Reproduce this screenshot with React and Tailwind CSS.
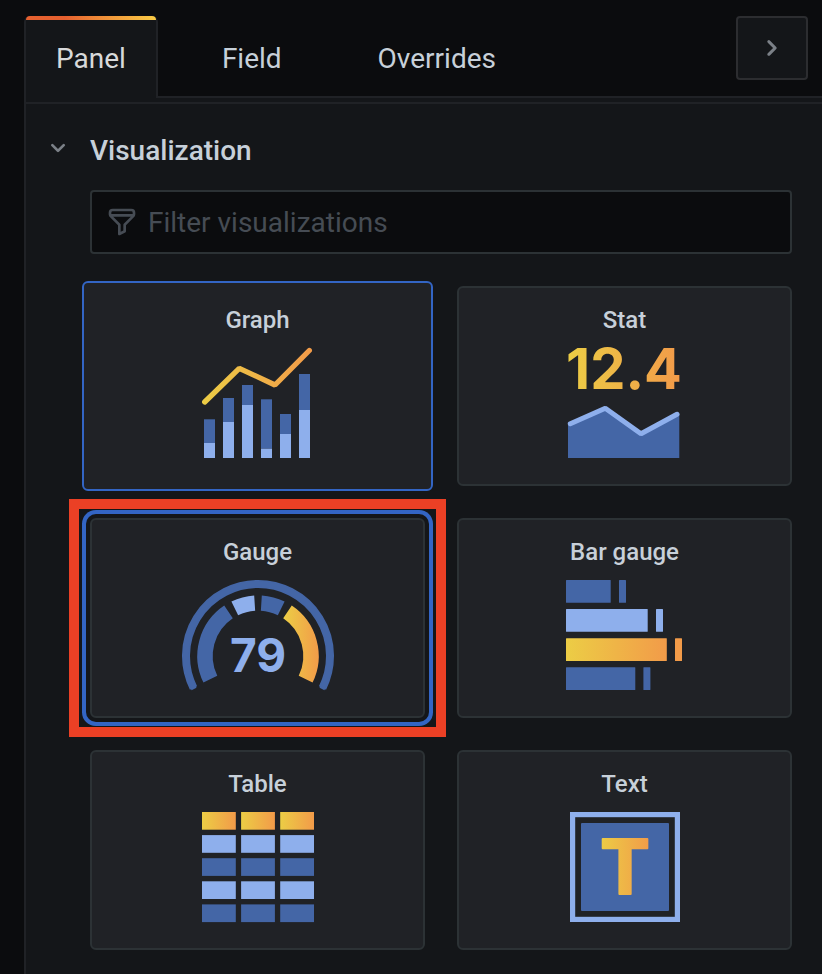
import { useState } from "react";

const DARK = "#4466a6";
const LIGHT = "#8eafec";

function Gradient({ id, x1, x2 }) {
  return (
    <linearGradient id={id} gradientUnits="userSpaceOnUse" x1={x1} x2={x2} y1="0" y2="0">
      <stop offset="0" stopColor="#eccd45" />
      <stop offset="1" stopColor="#f29b49" />
    </linearGradient>
  );
}

function Drawing({ children }) {
  return (
    <svg viewBox="0 0 160 110" className="h-[110px] w-40 overflow-visible" aria-hidden="true">
      {children}
    </svg>
  );
}

function GraphDrawing() {
  // [x, top of the bar, top of its light part]
  const bars = [
    [26, 71.3, 95],
    [45, 50, 74],
    [64, 37, 57],
    [83, 51.3, 100.7],
    [102, 66, 86],
    [121, 26, 62],
  ];
  return (
    <Drawing>
      <defs>
        <Gradient id="graph-line" x1="24" x2="134" />
      </defs>
      {bars.map(([x, top, split]) => (
        <g key={x}>
          <rect x={x} y={top} width="11" height={split - top} fill={DARK} />
          <rect x={x} y={split} width="11" height={110 - split} fill={LIGHT} />
        </g>
      ))}
      <polyline
        points="26.7,54 61.3,20.3 97,37 131.3,2.5"
        fill="none"
        stroke="url(#graph-line)"
        strokeWidth="5.3"
        strokeLinecap="round"
        strokeLinejoin="bevel"
      />
    </Drawing>
  );
}

function StatDrawing() {
  return (
    <Drawing>
      <defs>
        <Gradient id="stat-value" x1="23" x2="134" />
      </defs>
      <text x="79" y="41" textAnchor="middle" fontSize="56" fill="url(#stat-value)" className="font-['Inter',sans-serif] font-bold">
        12.4
      </text>
      <polygon points="23,76 60.3,60.3 96,85.7 134.3,66 134.3,110 23,110" fill={DARK} />
      <polyline
        points="25.3,75.7 60.3,60.3 96,85.7 132,66.3"
        fill="none"
        stroke={LIGHT}
        strokeWidth="5"
        strokeLinecap="round"
        strokeLinejoin="bevel"
      />
    </Drawing>
  );
}

// Arc around the gauge's centre; angles in degrees, clockwise from the right.
function arc(radius, from, to) {
  const point = (deg) => {
    const a = (deg * Math.PI) / 180;
    return `${(80 + radius * Math.cos(a)).toFixed(2)} ${(76 + radius * Math.sin(a)).toFixed(2)}`;
  };
  return `M${point(from)}A${radius} ${radius} 0 ${to - from > 180 ? 1 : 0} 1 ${point(to)}`;
}

function GaugeDrawing() {
  return (
    <Drawing>
      <defs>
        <Gradient id="gauge-high" x1="106" x2="141" />
      </defs>
      <g fill="none" stroke={DARK} strokeWidth="15.4">
        <path d={arc(72, 153.6, 386.4)} strokeWidth="8" />
        <path d={arc(72, 152.7, 387.3)} strokeWidth="5.5" />
        <path d={arc(53, 154, 236.2)} />
        <path d={arc(53, 244, 266.4)} stroke={LIGHT} />
        <path d={arc(53, 273.6, 296)} />
        <path d={arc(53, 303.8, 386)} stroke="url(#gauge-high)" />
      </g>
      <text x="80" y="92" textAnchor="middle" fontSize="46" fill={LIGHT} className="font-['Inter',sans-serif] font-bold">
        79
      </text>
    </Drawing>
  );
}

function BarGaugeDrawing() {
  // [top, bar width, marker x, bar fill, marker fill]
  const rows = [
    [0, 44.7, 74, DARK, DARK],
    [29.1, 81.7, 111, LIGHT, LIGHT],
    [58.2, 100.8, 130, "url(#bar-gauge)", "#f29b49"],
    [87.3, 69.3, 98.4, DARK, DARK],
  ];
  return (
    <Drawing>
      <defs>
        <Gradient id="bar-gauge" x1="21" x2="122" />
      </defs>
      {rows.map(([y, width, marker, fill, markerFill]) => (
        <g key={y}>
          <rect x="21" y={y} width={width} height="22.7" rx="0.5" fill={fill} />
          <rect x={marker} y={y} width="7" height="22.7" rx="0.5" fill={markerFill} />
        </g>
      ))}
    </Drawing>
  );
}

function TableDrawing() {
  const columns = [24, 63.1, 102.2];
  return (
    <Drawing>
      <defs>
        {columns.map((x, i) => (
          <Gradient key={x} id={`table-head-${i}`} x1={x} x2={x + 33.8} />
        ))}
      </defs>
      {columns.map((x, i) =>
        [`url(#table-head-${i})`, LIGHT, DARK, LIGHT, DARK].map((fill, row) => (
          <rect key={`${x}-${row}`} x={x} y={row * 23.1} width="33.8" height="17.7" fill={fill} />
        ))
      )}
    </Drawing>
  );
}

function TextDrawing() {
  return (
    <Drawing>
      <defs>
        <Gradient id="text-letter" x1="55" x2="105" />
      </defs>
      <rect x="27.6" y="2.6" width="104.8" height="104.8" fill="none" stroke={LIGHT} strokeWidth="5.2" />
      <rect x="36" y="11" width="88" height="88" rx="1" fill={DARK} />
      <text
        x="80"
        y="82"
        textAnchor="middle"
        fontSize="75"
        fill="url(#text-letter)"
        stroke="url(#text-letter)"
        strokeWidth="2"
        strokeLinejoin="round"
        className="font-['Inter',sans-serif] font-bold"
      >
        T
      </text>
    </Drawing>
  );
}

const VISUALIZATIONS = [
  { name: "Graph", Picture: GraphDrawing, selected: true },
  { name: "Stat", Picture: StatDrawing },
  { name: "Gauge", Picture: GaugeDrawing, focused: true },
  { name: "Bar gauge", Picture: BarGaugeDrawing },
  { name: "Table", Picture: TableDrawing },
  { name: "Text", Picture: TextDrawing },
];

function VisualizationCard({ name, Picture, selected, focused }) {
  const base = "flex flex-col items-center border-2 bg-[#202226]";
  let look = "h-[200px] w-full rounded-md border-[#2c3235] pt-[18px]";
  if (selected) look = "-mx-2 -my-[5px] h-[210px] w-[calc(100%+16px)] rounded-md border-[#3365c4] pt-[23px]";
  if (focused) look += " ring-4 ring-[#3365c4] ring-offset-4 ring-offset-[#141619]";
  return (
    <li className="relative">
      <button type="button" aria-pressed={Boolean(selected)} className={`${base} ${look}`}>
        <span className="mb-3.5 text-2xl leading-7 font-medium text-[#c7d0d9]">{name}</span>
        <Picture />
      </button>
      {focused && (
        <div className="pointer-events-none absolute -inset-x-[21px] -inset-y-[19px] border-10 border-[#eb4025]" />
      )}
    </li>
  );
}

export default function App() {
  const [filter, setFilter] = useState("");
  return (
    <div className="flex min-h-screen flex-col bg-[#0b0c0e] pl-6 font-['Roboto',sans-serif] text-[28px] leading-[34px] text-[#c7d0d9]">
      <header className="flex items-start justify-between border-b-2 border-[#202226] pt-4">
        <nav className="-mb-0.5 flex gap-8" aria-label="Panel options">
          <a href="#panel" aria-current="page" className="relative h-[82px] rounded-t-md border-x-2 border-[#202226] bg-[#141619] px-[30px] pt-[26px] text-[#d8d9da]">
            <span className="absolute inset-x-0 top-0 h-1 rounded-t bg-linear-to-r from-[#e5602f] from-30% to-[#f8cb45]" />
            Panel
          </a>
          <a href="#field" className="h-20 px-8 pt-[26px]">
            Field
          </a>
          <a href="#overrides" className="h-20 px-8 pt-[26px]">
            Overrides
          </a>
        </nav>
        <button type="button" aria-label="Hide options" className="mr-3.5 flex h-16 w-[72px] items-center justify-center rounded border-2 border-[#2c2d30] bg-[#141619]">
          <svg viewBox="0 0 24 24" className="size-9 fill-[#7b8087]" aria-hidden="true">
            <path d="M14.83,11.29,10.59,7.05a1,1,0,0,0-1.42,0,1,1,0,0,0,0,1.41L12.71,12,9.17,15.54a1,1,0,0,0,0,1.41,1,1,0,0,0,.71.29,1,1,0,0,0,.71-.29l4.24-4.24A1,1,0,0,0,14.83,11.29Z" />
          </svg>
        </button>
      </header>
      <main className="grow border-l-2 border-[#202226] bg-[#141619] pt-1">
        <section className="border-t-2 border-[#202226] pt-[30px] pr-[30px] pb-6">
          <h2>
            <button type="button" aria-expanded="true" className="flex h-[34px] items-center gap-4 pl-4 font-medium">
              <svg viewBox="0 0 24 24" className="h-[38px] w-8 fill-[#7b8087] pb-1.5" aria-hidden="true">
                <path d="M17,9.17a1,1,0,0,0-1.41,0L12,12.71,8.46,9.17a1,1,0,0,0-1.41,0,1,1,0,0,0,0,1.42l4.24,4.24a1,1,0,0,0,1.42,0L17,10.59A1,1,0,0,0,17,9.17Z" />
              </svg>
              Visualization
            </button>
          </h2>
          <div className="mt-[22px] ml-16 flex flex-col gap-8">
            <label className="flex h-16 items-center gap-2.5 rounded border-2 border-[#2c3235] bg-[#0b0c0e] px-3.5">
              <svg viewBox="0 0 24 24" className="size-8 shrink-0 fill-[#464c54]" aria-hidden="true">
                <path d="M19,2H5A3,3,0,0,0,2,5V6.17a3,3,0,0,0,.25,1.2l0,.06a2.81,2.81,0,0,0,.59.86L9,14.41V21a1,1,0,0,0,.47.85A1,1,0,0,0,10,22a1,1,0,0,0,.45-.11l4-2A1,1,0,0,0,15,19V14.41l6.12-6.12a2.81,2.81,0,0,0,.59-.86l0-.06A3,3,0,0,0,22,6.17V5A3,3,0,0,0,19,2ZM13.29,13.29A1,1,0,0,0,13,14v4.38l-2,1V14a1,1,0,0,0-.29-.71L5.41,8H18.59ZM20,6H4V5A1,1,0,0,1,5,4H19a1,1,0,0,1,1,1Z" />
              </svg>
              <input
                type="text"
                aria-label="Filter visualizations"
                placeholder="Filter visualizations"
                value={filter}
                onChange={(event) => setFilter(event.target.value)}
                className="min-w-0 grow bg-transparent pt-0.5 outline-none placeholder:text-[#464c54]"
              />
            </label>
            <ul className="grid grid-cols-2 gap-8">
              {VISUALIZATIONS.filter(({ name }) => name.toLowerCase().includes(filter.toLowerCase())).map((item) => (
                <VisualizationCard key={item.name} {...item} />
              ))}
            </ul>
          </div>
        </section>
      </main>
    </div>
  );
}
